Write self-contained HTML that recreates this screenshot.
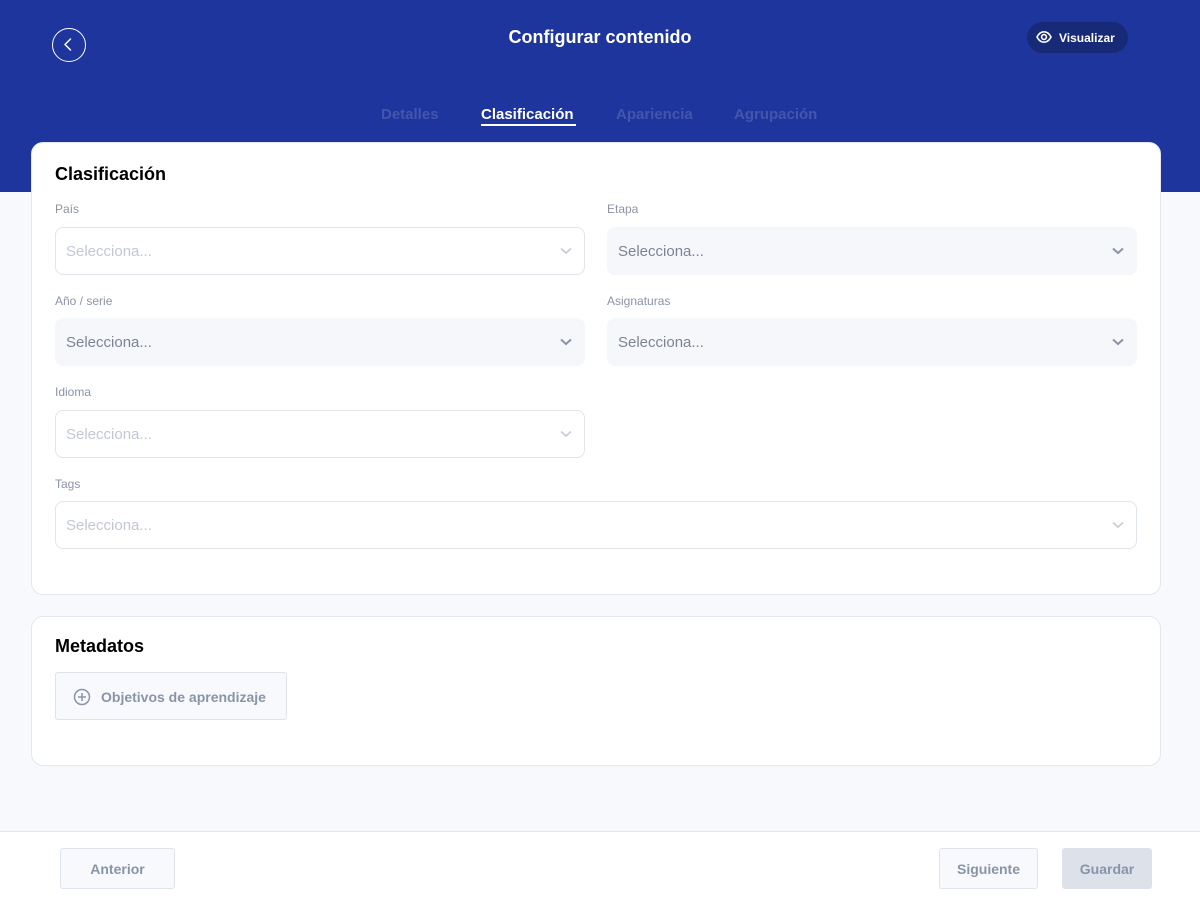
<!DOCTYPE html>
<html><head><meta charset="utf-8"><style>
*{box-sizing:border-box;margin:0;padding:0}
body{width:1200px;height:904px;position:relative;background:#f7f9fc;font-family:"Liberation Sans",sans-serif;overflow:hidden}
.hdr{position:absolute;left:0;top:0;width:1200px;height:192px;background:#1e359e}
.back{position:absolute;left:52px;top:28px;width:34px;height:34px;border:1.5px solid #fff;border-radius:50%}
.title{position:absolute;left:0;width:1200px;top:27px;text-align:center;color:#fff;font-weight:bold;font-size:18px}
.vis{position:absolute;left:1027px;top:22px;width:101px;height:31px;border-radius:16px;background:#172a78;color:#fff;font-weight:bold;font-size:12px}
.vis span{position:absolute;left:32px;top:9px}
.tab{position:absolute;top:106px;font-size:15px;font-weight:bold;color:#4356ad}
.card{position:absolute;left:31px;width:1130px;background:#fff;border:1px solid #e3e7ee;border-radius:12px}
h2{position:absolute;left:23px;font-size:18px;color:#000}
.lbl{position:absolute;font-size:12px;color:#8a94a6}
.f{position:absolute;height:48px;border-radius:8px;border:1px solid #e1e5ec;background:#fff;font-size:15px;color:#c2c8d3}
.f.fill{background:#f5f7fb;border-color:#f5f7fb;color:#7c8595}
.f span{position:absolute;left:10px;top:15px}
.f svg{position:absolute;right:12px;top:19px}
.btn{position:absolute;border:1px solid #dfe3ea;background:#f7f9fc;border-radius:3px;color:#8a94a8;font-weight:bold;font-size:14px;text-align:center}
</style></head><body>
<div class="hdr">
<div class="back"><svg width="31" height="31" viewBox="0 0 31 31"><path d="M17.5 10 L12 15.5 L17.5 21" fill="none" stroke="#fff" stroke-width="1.5" stroke-linecap="round" stroke-linejoin="round"/></svg></div>
<div class="title">Configurar contenido</div>
<div class="vis"><svg style="position:absolute;left:9px;top:7px" width="16" height="16" viewBox="0 0 16 16"><path d="M1 8C3 4 5.5 2.8 8 2.8S13 4 15 8C13 12 10.5 13.2 8 13.2S3 12 1 8Z" fill="none" stroke="#fff" stroke-width="1.6"/><circle cx="8" cy="8" r="2.4" fill="none" stroke="#fff" stroke-width="1.6"/></svg><span>Visualizar</span></div>
<div class="tab" style="left:381px">Detalles</div>
<div class="tab" style="left:481px;color:#fff">Clasificación</div>
<div style="position:absolute;left:481px;top:124px;width:95px;height:2px;background:#fff"></div>
<div class="tab" style="left:616px">Apariencia</div>
<div class="tab" style="left:734px">Agrupación</div>
</div>

<div class="card" style="top:142px;height:453px">
<h2 style="top:21px">Clasificación</h2>
</div>
<div class="lbl" style="left:55px;top:202px">País</div>
<div class="lbl" style="left:607px;top:202px">Etapa</div>
<div class="lbl" style="left:55px;top:294px">Año / serie</div>
<div class="lbl" style="left:607px;top:294px">Asignaturas</div>
<div class="lbl" style="left:55px;top:385px">Idioma</div>
<div class="lbl" style="left:55px;top:477px">Tags</div>

<div class="f" style="left:55px;top:227px;width:530px"><span>Selecciona...</span><svg width="12" height="8" viewBox="0 0 12 8"><path d="M1 1.5L6 6L11 1.5" fill="none" stroke="#c8ced8" stroke-width="1.8"/></svg></div>
<div class="f fill" style="left:607px;top:227px;width:530px"><span>Selecciona...</span><svg width="12" height="8" viewBox="0 0 12 8"><path d="M1 1.5L6 6L11 1.5" fill="none" stroke="#8a94a6" stroke-width="2"/></svg></div>
<div class="f fill" style="left:55px;top:318px;width:530px"><span>Selecciona...</span><svg width="12" height="8" viewBox="0 0 12 8"><path d="M1 1.5L6 6L11 1.5" fill="none" stroke="#8a94a6" stroke-width="2"/></svg></div>
<div class="f fill" style="left:607px;top:318px;width:530px"><span>Selecciona...</span><svg width="12" height="8" viewBox="0 0 12 8"><path d="M1 1.5L6 6L11 1.5" fill="none" stroke="#8a94a6" stroke-width="2"/></svg></div>
<div class="f" style="left:55px;top:410px;width:530px"><span>Selecciona...</span><svg width="12" height="8" viewBox="0 0 12 8"><path d="M1 1.5L6 6L11 1.5" fill="none" stroke="#c8ced8" stroke-width="1.8"/></svg></div>
<div class="f" style="left:55px;top:501px;width:1082px"><span>Selecciona...</span><svg width="12" height="8" viewBox="0 0 12 8"><path d="M1 1.5L6 6L11 1.5" fill="none" stroke="#c8ced8" stroke-width="1.8"/></svg></div>

<div class="card" style="top:616px;height:150px">
<h2 style="top:19px">Metadatos</h2>
</div>
<div class="btn" style="left:55px;top:672px;width:232px;height:48px;line-height:48px;text-align:left;padding-left:45px">Objetivos de aprendizaje
<svg style="position:absolute;left:17px;top:15px" width="18" height="18" viewBox="0 0 18 18"><circle cx="9" cy="9" r="7.5" fill="none" stroke="#8a94a8" stroke-width="1.5"/><path d="M9 5v8M5 9h8" stroke="#8a94a8" stroke-width="1.5"/></svg></div>

<div style="position:absolute;left:0;top:831px;width:1200px;height:73px;background:#fff;border-top:1px solid #e3e7ee"></div>
<div class="btn" style="left:60px;top:848px;width:115px;height:41px;line-height:40px">Anterior</div>
<div class="btn" style="left:939px;top:848px;width:99px;height:41px;line-height:40px">Siguiente</div>
<div class="btn" style="left:1062px;top:848px;width:90px;height:41px;line-height:40px;background:#dde2ea;border-color:#dde2ea">Guardar</div>
</body></html>
